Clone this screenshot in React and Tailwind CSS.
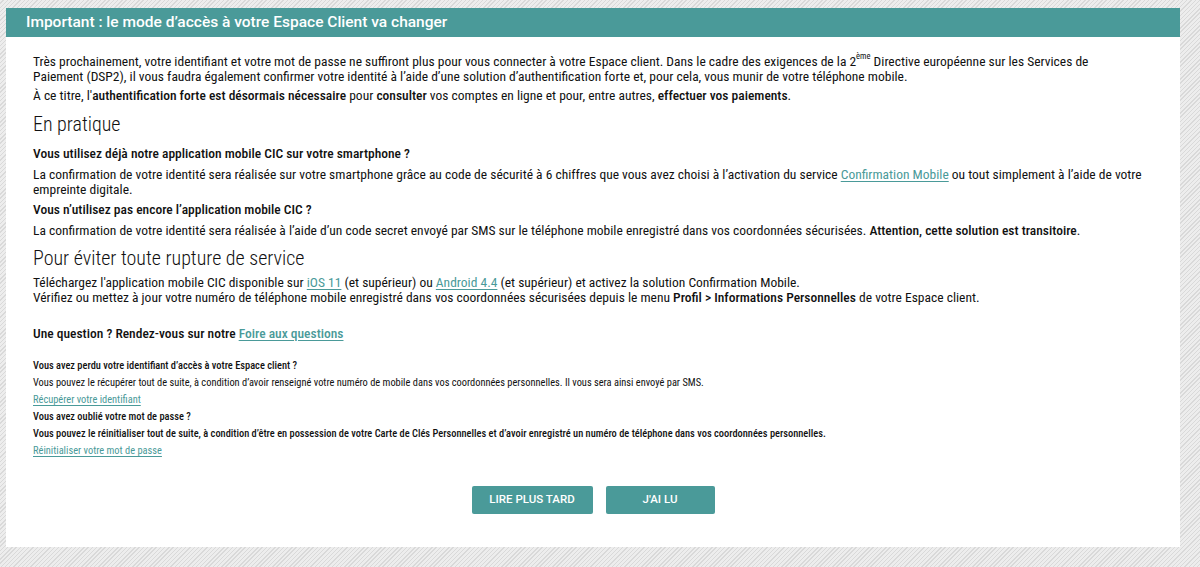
import React from 'react';

// Lien teal souligné
const Link = ({ children }) => (
  <a href="#" className="text-[#4a9a99] underline underline-offset-2">
    {children}
  </a>
);

const App = () => {
  return (
    <div
      className="min-h-[567px] w-full pt-2 pl-[6px] pr-5 pb-5 bg-[repeating-linear-gradient(135deg,#ededed_0px,#ededed_2px,#d9d9d9_2px,#d9d9d9_3px)]"
      style={{ fontFamily: 'Roboto, "Liberation Sans", sans-serif' }}
    >
      <div className="w-[1174px] h-[539px] bg-white flex flex-col">
        {/* Header */}
        <div className="h-[29px] bg-[#4a9a99] flex items-center pl-[20px]">
          <h1 className="text-white text-[15.5px] font-medium">
            Important : le mode d’accès à votre Espace Client va changer
          </h1>
        </div>

        {/* Body */}
        <div className="flex flex-col pl-[27px] pr-[36px] pt-[17px] text-[#111] text-[13.5px] leading-[15px] font-stretch-condensed">
          <p>
            Très prochainement, votre identifiant et votre mot de passe ne suffiront plus pour vous connecter à votre
            Espace client. Dans le cadre des exigences de la 2
            <sup className="text-[8.5px] leading-none align-[3px]">ème</sup> Directive européenne
            sur les Services de
            <br />
            Paiement (DSP2), il vous faudra également confirmer votre identité à l’aide d’une solution
            d’authentification forte et, pour cela, vous munir de votre téléphone mobile.
          </p>
          <p className="mt-1">
            À ce titre, l'<b className="font-medium">authentification forte est désormais nécessaire</b> pour{' '}
            <b className="font-medium">consulter</b> vos comptes en ligne et pour, entre autres,{' '}
            <b className="font-medium">effectuer vos paiements</b>.
          </p>

          <h2 className="text-[20px] leading-[24px] font-light mt-[9px]">En pratique</h2>
          <p className="font-medium mt-[10px]">Vous utilisez déjà notre application mobile CIC sur votre smartphone ?</p>
          <p className="mt-[6px]">
            La confirmation de votre identité sera réalisée sur votre smartphone grâce au code de sécurité à 6 chiffres que
            vous avez choisi à l’activation du service <Link>Confirmation Mobile</Link> ou tout simplement à l’aide de votre
            empreinte digitale.
          </p>
          <p className="font-medium mt-[5px]">Vous n’utilisez pas encore l’application mobile CIC ?</p>
          <p className="mt-[6px]">
            La confirmation de votre identité sera réalisée à l’aide d’un code secret envoyé par SMS sur le téléphone mobile
            enregistré dans vos coordonnées sécurisées. <b className="font-medium">Attention, cette solution est transitoire</b>.
          </p>

          <h2 className="text-[20px] leading-[24px] font-light mt-[8px]">Pour éviter toute rupture de service</h2>
          <p className="mt-[5px]">
            Téléchargez l'application mobile CIC disponible sur <Link>iOS 11</Link> (et supérieur) ou{' '}
            <Link>Android 4.4</Link> (et supérieur) et activez la solution Confirmation Mobile.
          </p>
          <p>
            Vérifiez ou mettez à jour votre numéro de téléphone mobile enregistré dans vos coordonnées sécurisées depuis le
            menu <b className="font-medium">Profil &gt; Informations Personnelles</b> de votre Espace client.
          </p>

          <p className="font-medium mt-[21px]">
            Une question ? Rendez-vous sur notre <Link>Foire aux questions</Link>
          </p>

          {/* Aide identifiant / mot de passe */}
          <div className="flex flex-col text-[10.4px] leading-[12px] mt-[19px] gap-[5px]">
            <p className="font-medium">Vous avez perdu votre identifiant d’accès à votre Espace client ?</p>
            <p>
              Vous pouvez le récupérer tout de suite, à condition d’avoir renseigné votre numéro de mobile dans vos
              coordonnées personnelles. Il vous sera ainsi envoyé par SMS.
            </p>
            <p>
              <Link>Récupérer votre identifiant</Link>
            </p>
            <p className="font-medium">Vous avez oublié votre mot de passe ?</p>
            <p className="font-medium">
              Vous pouvez le réinitialiser tout de suite, à condition d’être en possession de votre Carte de Clés
              Personnelles et d’avoir enregistré un numéro de téléphone dans vos coordonnées personnelles.
            </p>
            <p>
              <Link>Réinitialiser votre mot de passe</Link>
            </p>
          </div>
        </div>

        {/* Boutons */}
        <div className="flex justify-center gap-[13px] mt-[29px]">
          <button className="w-[121px] h-[28px] bg-[#4a9a99] text-white text-[11.5px] font-medium rounded-[2px]">
            LIRE PLUS TARD
          </button>
          <button className="w-[109px] h-[28px] bg-[#4a9a99] text-white text-[11.5px] font-medium rounded-[2px]">
            J'AI LU
          </button>
        </div>
      </div>
    </div>
  );
};

export default App;
